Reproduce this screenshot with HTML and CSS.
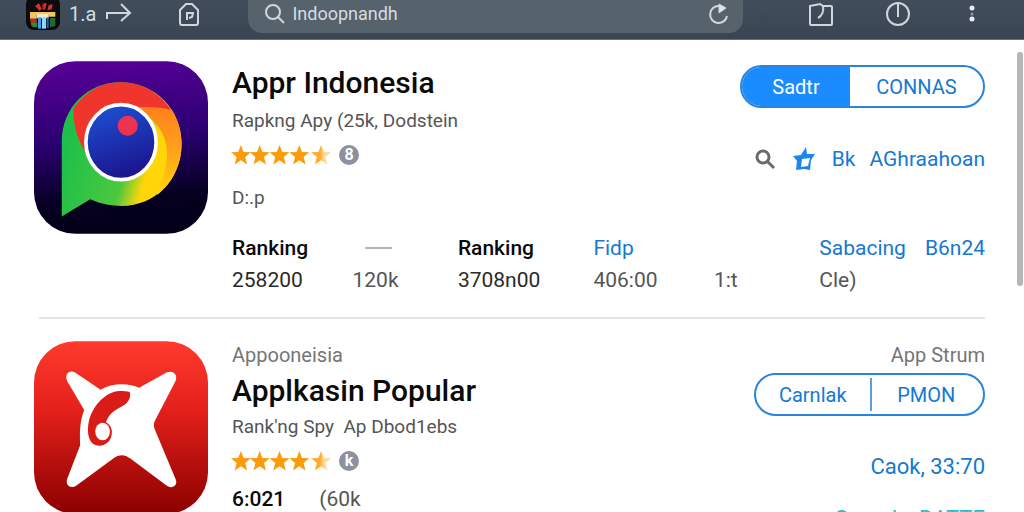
FILE: index.html
```html
<!DOCTYPE html>
<html lang="id">
<head>
    <meta charset="UTF-8">
    <title>Appr Indonesia</title>
    <meta name="viewport" content="width=device-width, initial-scale=1">
    <link rel="stylesheet" href="styles.css">
</head>
<body>
    <header class="toolbar">
        <a href="#" class="tab" aria-label="Aplikasi">
            <svg width="34" height="34" viewBox="0 0 102 102">
                <rect width="102" height="102" rx="24" fill="#0c0a0c"/>
                <path d="M27 30l12-8 8 16-6 7zM54 20l8 3-5 18-9-2zM68 28l12-4-3 16-13 3z" fill="#d8322a"/>
                <path d="M46 14l8 22-3 9z" fill="#8d211c"/>
                <path d="M12 48h76v14H68V56H32v12H12z" fill="#f3c65c"/>
                <path d="M32 54h36v13H32z" fill="#f6e9c0"/>
                <path d="M12 68h20v12l-7 10H16z" fill="#b9301f"/>
                <path d="M16 80h18v14H20z" fill="#2f8a3c"/>
                <path d="M36 64h9v34h-9z" fill="#3b9ff0"/>
                <path d="M48 64h12v34H48z" fill="#8fd8f6"/>
                <path d="M62 64h6v32h-6z" fill="#2664c4"/>
                <path d="M72 66h16v24l-16 4z" fill="#1f6b33"/>
            </svg>
            <span>1.a</span>
        </a>
        <button class="tool forward" aria-label="Maju">
            <svg width="26" height="22" viewBox="0 0 26 22">
                <path d="M1 18v-6h23M15 3l9 9-9 8" />
            </svg>
        </button>
        <button class="tool home" aria-label="Beranda">
            <svg width="22" height="26" viewBox="0 0 22 26">
                <path d="M2 9l6-6h6l6 6v13a2 2 0 0 1-2 2H4a2 2 0 0 1-2-2z"/>
                <path d="M9 19v-7h6l-1 4-3 1"/>
            </svg>
        </button>
        <form class="search">
            <svg width="22" height="22" viewBox="0 0 22 22">
                <circle cx="9" cy="9" r="7"/>
                <path d="M14 14l6 6"/>
            </svg>
            <input type="text" aria-label="Cari" value="Indoopnandh">
            <button type="button" class="tool" aria-label="Muat ulang">
                <svg width="22" height="24" viewBox="0 0 22 24">
                    <path d="M12 4a8.500 8.500 0 1 0 8 10"/>
                    <path d="M12 2l7 4-7 5z" fill="#dfe6ea" stroke-width="1"/>
                </svg>
            </button>
        </form>
        <button class="tool tabs" aria-label="Tab">
            <svg width="26" height="26" viewBox="0 0 26 26">
                <path d="M2 5l10-2 3 2h8a1 1 0 0 1 1 1v17a1 1 0 0 1-1 1H3a1 1 0 0 1-1-1z"/>
                <path d="M15 5c1 5-1 10-5 12"/>
            </svg>
        </button>
        <button class="tool power" aria-label="Daya">
            <svg width="24" height="26" viewBox="0 0 24 26">
                <circle cx="12" cy="13" r="11"/>
                <path d="M12 3v13"/>
            </svg>
        </button>
        <button class="tool more" aria-label="Menu">
            <svg width="8" height="26" viewBox="0 0 8 26">
                <circle class="dot" cx="4" cy="8" r="2.500"/>
                <circle class="dim" cx="4" cy="14" r="1.500"/>
                <circle class="dot" cx="4" cy="19" r="2.500"/>
            </svg>
        </button>
    </header>

    <main class="list">
        <article class="app">
            <svg class="icon" viewBox="42 34 520 516">
                <defs>
                    <linearGradient id="violet" x1="0" y1="0" x2="0.1" y2="1">
                        <stop offset="0" stop-color="#5a0099"/>
                        <stop offset="0.5" stop-color="#2a0070"/>
                        <stop offset="0.85" stop-color="#05001f"/>
                        <stop offset="1" stop-color="#02001a"/>
                    </linearGradient>
                    <linearGradient id="green" gradientUnits="userSpaceOnUse" x1="130" y1="340" x2="480" y2="440">
                        <stop offset="0" stop-color="#1fc04a"/>
                        <stop offset="0.5" stop-color="#4cc83e"/>
                        <stop offset="0.68" stop-color="#ffd60a"/>
                    </linearGradient>
                    <linearGradient id="orange" x1="0" y1="0" x2="0" y2="1">
                        <stop offset="0" stop-color="#ff7a1c"/>
                        <stop offset="0.5" stop-color="#ff9f1c"/>
                        <stop offset="1" stop-color="#ffd60a"/>
                    </linearGradient>
                    <linearGradient id="blue" x1="0" y1="0" x2="0.3" y2="1">
                        <stop offset="0" stop-color="#1c55d8"/>
                        <stop offset="1" stop-color="#1c1690"/>
                    </linearGradient>
                </defs>
                <rect x="42" y="34" width="520" height="516" rx="124" fill="url(#violet)"/>
                <path d="M125 498V275C125 170 205 97 300 97C405 97 483 180 483 281C483 390 400 467 305 467C270 467 240 460 210 447Z" fill="url(#green)"/>
                <path d="M340 150L452 176C475 212 483 245 483 281C483 345 455 400 410 434C425 390 445 340 438 290C430 240 400 200 340 174Z" fill="url(#orange)"/>
                <path d="M160 175C195 125 245 97 300 97C365 97 420 130 452 180C420 171 380 170 350 172L200 312C170 270 158 220 160 175Z" fill="#f0352d"/>
                <ellipse cx="302" cy="276" rx="105" ry="112" fill="url(#blue)" stroke="#fff" stroke-width="11"/>
                <circle cx="322" cy="227" r="30" fill="#ee3350"/>
            </svg>
            <div class="body">
                <div class="head">
                    <div class="info">
                        <h2>Appr Indonesia</h2>
                        <p class="sub">Rapkng Apy (25k, Dodstein</p>
                        <div class="rating">
                            <svg class="stars" viewBox="0 0 100 20" role="img" aria-label="4,5">
                                <defs>
                                    <path id="star" d="M10 0l2.700 7 7.300 0.300-5.700 4.600 2 7.600-6.300-4.200-6.300 4.200 2-7.600-5.700-4.600 7.300-0.300z"/>
                                    <linearGradient id="half">
                                        <stop offset="0.45" stop-color="#ffab2e"/>
                                        <stop offset="0.65" stop-color="#ffd99a"/>
                                    </linearGradient>
                                </defs>
                                <use href="#star" x="-1"/>
                                <use href="#star" x="18"/>
                                <use href="#star" x="38"/>
                                <use href="#star" x="58"/>
                                <use href="#star" x="80" fill="url(#half)"/>
                            </svg>
                            <span class="badge">8</span>
                        </div>
                        <p class="note">D:.p</p>
                    </div>
                    <div class="actions">
                        <div class="pill">
                            <button class="active">Sadtr</button>
                            <button>CONNAS</button>
                        </div>
                        <div class="links">
                            <svg width="22" height="22" viewBox="0 0 22 22" fill="none" stroke="#6a6a6a" stroke-width="3">
                                <circle cx="9" cy="9" r="6"/>
                                <path d="M13 13l7 7"/>
                            </svg>
                            <svg width="24" height="24" viewBox="0 0 24 24" fill="#1a86ee" fill-rule="evenodd">
                                <path d="M14 0l1 7 8 0-4 6-1 10-6-1-8 1 1-9-4-5 8-1zM10 12l8-1-2 8-7 1z"/>
                            </svg>
                            <a href="#">Bk</a>
                            <a href="#">AGhraahoan</a>
                        </div>
                    </div>
                </div>
                <table class="stats">
                    <tr>
                        <th>Ranking</th>
                        <th class="dash"><hr></th>
                        <th>Ranking</th>
                        <th><a href="#">Fidp</a></th>
                        <th></th>
                        <th class="last"><a href="#">Sabacing</a> <a href="#">B6n24</a></th>
                    </tr>
                    <tr>
                        <td class="dark">258200</td>
                        <td>120k</td>
                        <td class="dark">3708n00</td>
                        <td>406:00</td>
                        <td>1:t</td>
                        <td>Cle)</td>
                    </tr>
                </table>
            </div>
        </article>

        <article class="app">
            <svg class="icon" viewBox="42 34 520 516">
                <defs>
                    <linearGradient id="red" x1="0" y1="0" x2="0" y2="1">
                        <stop offset="0" stop-color="#ff3a2e"/>
                        <stop offset="0.4" stop-color="#e3201a"/>
                        <stop offset="1" stop-color="#8c0000"/>
                    </linearGradient>
                </defs>
                <rect x="42" y="34" width="520" height="516" rx="124" fill="url(#red)"/>
                <path d="M165 128L241 179C275 158 325 158 356 173L438 128C458 118 473 135 465 153L404 270C398 282 400 290 404 300L466 448C472 465 455 476 440 467L330 385C314 372 298 372 283 382L168 466C152 476 135 465 141 446L180 345C178 300 180 270 192 240L141 153C132 133 148 118 165 128Z" fill="#fff"/>
                <path d="M328 186C333 205 322 221 304 229C282 240 265 252 257 276C273 285 278 300 273 319C266 342 242 353 222 343C203 332 200 300 206 273C216 230 255 184 298 183C310 183 320 184 328 186Z" fill="#d91c17"/>
                <ellipse cx="247" cy="304" rx="22" ry="26" fill="#fff"/>
            </svg>
            <div class="body">
                <div class="head">
                    <div class="info">
                        <p class="eyebrow">Appooneisia</p>
                        <h2>Applkasin Popular</h2>
                        <p class="sub">Rank'ng Spy &nbsp;Ap Dbod1ebs</p>
                        <div class="rating">
                            <svg class="stars" viewBox="0 0 100 20" role="img" aria-label="4,5">
                                <use href="#star" x="-1"/>
                                <use href="#star" x="18"/>
                                <use href="#star" x="38"/>
                                <use href="#star" x="58"/>
                                <use href="#star" x="80" fill="url(#half)"/>
                            </svg>
                            <span class="badge">k</span>
                        </div>
                        <p class="score"><strong>6:021</strong> <span>(60k</span></p>
                    </div>
                    <div class="actions">
                        <p class="eyebrow">App Strum</p>
                        <div class="pill split">
                            <button>Carnlak</button>
                            <button>PMON</button>
                        </div>
                        <a class="price" href="#">Caok, 33:70</a>
                        <a class="teal" href="#">Canpda, DATTE</a>
                    </div>
                </div>
            </div>
        </article>
    </main>
    <div class="scroll"></div>
</body>
</html>
```
FILE: styles.css
```css
* {
    box-sizing: border-box;
}
body {
    margin: 0;
    height: 100vh;
    overflow: hidden;
    background: #fff;
    color: #555;
    font-family: Roboto, 'Liberation Sans', sans-serif;
    font-size: 20px;
}
h2, p {
    margin: 0;
}
a {
    color: #1478d4;
    text-decoration: none;
}
button {
    font: inherit;
    border: none;
    background: none;
    padding: 0;
    cursor: pointer;
}
.toolbar {
    display: flex;
    align-items: flex-start;
    height: 40px;
    padding: 0 48px 0 26px;
    background: linear-gradient(#414d5a, #394552);
    border-bottom: 1px solid #66707a;
}
.tab {
    display: flex;
    gap: 9px;
    color: #d5dce2;
    line-height: 28px;
}
.tab svg {
    margin-top: -4px;
}
.tool {
    display: flex;
}
.toolbar svg {
    flex: none;
}
.tool svg, .search svg {
    fill: none;
    stroke: #cfd7dd;
    stroke-width: 2;
}
.forward {
    margin: 1px 0 0 10px;
}
.home {
    margin: 1px 48px 0 46px;
}
.search {
    flex: 1;
    display: flex;
    align-items: center;
    height: 33px;
    padding: 0 14px 6px 16px;
    background: #57636c;
    border-radius: 0 0 14px 14px;
}
.search input {
    flex: 1;
    min-width: 0;
    margin-left: 4px;
    border: none;
    outline: none;
    background: none;
    color: #d5dce2;
    font: inherit;
    font-size: 18px;
}
.tabs {
    margin: 1px 0 0 65px;
}
.power {
    margin: 1px 0 0 52px;
}
.more {
    margin: 0 0 0 58px;
}
.tool .dot {
    fill: #e8edf0;
    stroke: none;
}
.tool .dim {
    fill: #8e99a3;
    stroke: none;
}
.list {
    padding: 0 39px;
}
.app {
    display: flex;
    gap: 24px;
    margin-left: -5px;
    padding-top: 21px;
    padding-bottom: 21px;
}
.app + .app {
    position: relative;
    padding-top: 24px;
}
.app + .app::before {
    content: "";
    position: absolute;
    top: 0;
    left: 5px;
    right: 0;
    border-top: 2px solid #e4e4e6;
}
.icon {
    flex: none;
    width: 174px;
    height: 173px;
}
.body {
    flex: 1;
    padding-top: 2px;
}
.head {
    display: flex;
    justify-content: space-between;
}
h2 {
    color: #0a0a0a;
    font-size: 30px;
    font-weight: 500;
    line-height: 40px;
}
.sub {
    margin-top: 6px;
    font-size: 19px;
    line-height: 24px;
}
.eyebrow {
    color: #757575;
    line-height: 24px;
}
.eyebrow + h2 {
    margin-top: 4px;
}
.eyebrow + h2 + .sub {
    margin-top: 4px;
}
.rating {
    display: flex;
    align-items: center;
    gap: 8px;
    margin-top: 12px;
}
.stars {
    width: 99px;
    height: 20px;
    overflow: visible;
    fill: #fb9a0a;
}
.badge {
    width: 20px;
    height: 20px;
    border-radius: 50%;
    background: #8b919e;
    color: #fff;
    font-size: 16px;
    font-weight: bold;
    line-height: 20px;
    text-align: center;
}
.note {
    margin-top: 21px;
    font-size: 19px;
    line-height: 24px;
}
.actions {
    display: flex;
    flex-direction: column;
    align-items: flex-end;
}
.pill {
    display: flex;
    width: 245px;
    height: 43px;
    margin-top: 2px;
    border: 2px solid #2a84dc;
    border-radius: 22px;
    overflow: hidden;
}
.pill button {
    flex: 1;
    color: #1478d4;
    font-size: 20px;
}
.pill button.active {
    flex: none;
    width: 108px;
    background: #1a8cff;
    color: #fff;
}
.pill.split {
    width: 231px;
    margin-top: 6px;
}
.split button + button {
    position: relative;
}
.split button + button::before {
    content: "";
    position: absolute;
    left: 0;
    top: 3px;
    bottom: 3px;
    border-left: 2px solid #5c9fdc;
}
.links {
    display: flex;
    align-items: center;
    gap: 14px;
    margin-top: 35px;
    font-size: 21px;
    line-height: 32px;
}
.links svg {
    margin-right: 2px;
}
.stats {
    width: 100%;
    margin-top: 22px;
    border-collapse: collapse;
    table-layout: fixed;
    line-height: 32px;
}
.stats th, .stats td {
    width: 16%;
    padding: 0;
    text-align: left;
    white-space: nowrap;
    font-size: 21px;
}
.stats th {
    color: #0a0a0a;
    font-weight: 500;
}
.stats th a {
    font-weight: 400;
}
.stats .dash {
    padding-left: 13px;
}
.dash hr {
    width: 27px;
    margin: 0;
    border: none;
    border-top: 2px solid #b4b4b4;
}
.stats th:nth-child(2) {
    width: 14%;
}
.stats th:nth-child(3) {
    width: 18%;
}
.stats th:nth-child(5) {
    width: 14%;
}
.stats .last {
    width: 22%;
}
.last a + a {
    float: right;
}
.stats .dark {
    color: #2a2a2a;
}
.score {
    display: flex;
    gap: 34px;
    margin-top: 12px;
    font-size: 21px;
    line-height: 32px;
}
.score strong {
    color: #0a0a0a;
    font-weight: 500;
}
.price {
    margin-top: 35px;
    font-size: 22px;
    line-height: 32px;
}
.teal {
    margin-top: 20px;
    color: #2fb8c8;
    font-size: 22px;
    line-height: 32px;
}
.scroll {
    position: fixed;
    top: 52px;
    right: 1px;
    width: 6px;
    height: 234px;
    border-radius: 3px;
    background: #b4b6b8;
}
```
